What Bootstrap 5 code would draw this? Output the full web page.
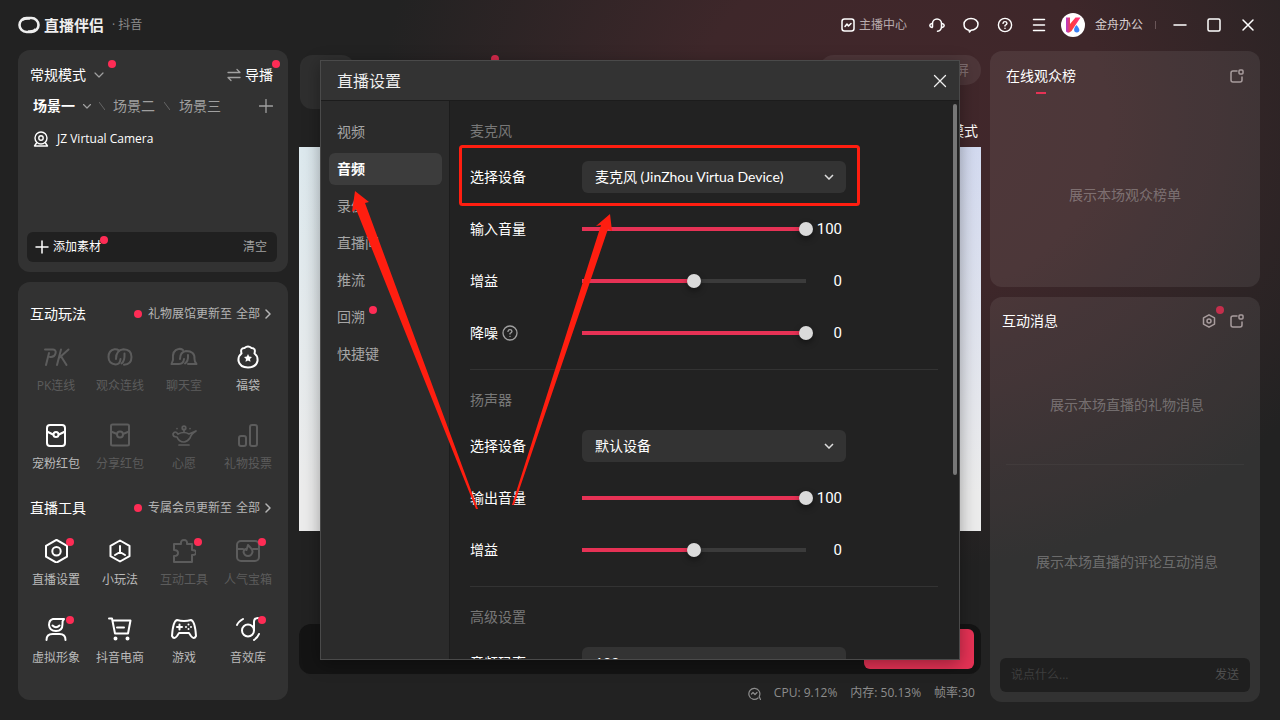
<!DOCTYPE html>
<html lang="zh-CN">
<head>
<meta charset="utf-8">
<meta name="viewport" content="width=device-width, initial-scale=1">
<title>直播伴侣</title>
<link href="https://cdn.jsdelivr.net/npm/bootstrap@5.3.0/dist/css/bootstrap.min.css" rel="stylesheet">
<script src="https://cdn.jsdelivr.net/npm/bootstrap@5.3.0/dist/js/bootstrap.bundle.min.js"></script>
<style>
  :root { --rose: #e63255; --dot: #fe2c55; --mark: #ff1e10; }
  body {
    font-family: "Open Sans", "Noto Sans CJK SC", sans-serif;
    font-size: 14px; line-height: 20px; color: #fff;
    background: #222 radial-gradient(ellipse 520px 450px at 900px 120px, #42272b 0, #3e272a 40%, #222 100%) no-repeat;
  }
  .studio { min-height: 100vh; }
  svg.ico { fill: none; stroke: currentColor; stroke-width: 2; stroke-linecap: round; stroke-linejoin: round; display: block; flex: none; }
  .plain { background: none; border: 0; padding: 0; color: inherit; }
  .t12 { font-size: 12px; line-height: 18px; }
  .dim { color: #a0a0a0; }
  .faint { color: rgba(255,255,255,.3); }
  .title-bar { height: 50px; padding: 0 20px 0 18px; }
  .title-bar .sq { width: 24px; height: 24px; display: grid; place-items: center; }
  .brand { font-size: 15px; font-weight: 700; color: #eee; }
  .avatar { width: 24px; height: 24px; }
  .bar-sep { width: 1px; height: 8px; background: #6a5658; margin: 0 12px 0 2px; }
  .stage { display: grid; grid-template-columns: 270px minmax(0,1fr) 270px; column-gap: 9px; padding: 0 20px 0 18px; }
  .center-col { padding-left: 2px; }
  .panel { background: rgba(255,255,255,.075); border-radius: 12px; }
  .red-dot { width: 8px; height: 8px; border-radius: 50%; background: var(--dot); flex: none; }
  .pin { position: absolute; top: -5px; right: -7px; }
  .scenes { min-height: 222px; padding: 10px 11px 10px 9px; }
  .add-bar { height: 30px; border-radius: 6px; background: #202020; padding: 0 10px 0 8px; }
  .tools { padding: 4px 8px 26px 6px; }
  .tools-head { height: 56px; padding: 0 8px 0 6px; }
  .tools-head a { color: #b5b5b5; }
  .tools-head .red-dot { margin-right: 6px; }
  .tiles { display: grid; grid-template-columns: repeat(4, 1fr); row-gap: 18px; }
  .tile { height: 60px; padding-top: 3px; display: flex; flex-direction: column; align-items: center; gap: 8px; font-size: 12px; line-height: 18px; white-space: nowrap; color: #bbb; }
  .tile .glyph { position: relative; color: #fff; }
  .tile .pin { top: -1px; right: -6px; }
  .tile:disabled, .tile:disabled .glyph { color: #5c5c5c; }
  .viewport { aspect-ratio: 16 / 9; background: linear-gradient(90deg, #dde9ee, #d3daf0); }
  .veil { background: linear-gradient(transparent, #ececec 90%); }
  .chip-l { width: 54px; height: 54px; border-radius: 12px; background: #2f2f2f; margin-left: 1px; }
  .chip-r { width: 162px; height: 30px; border-radius: 15px; background: rgba(255,255,255,.07); padding-right: 12px; }
  .dock { height: 50px; border-radius: 12px; background: #141414; padding: 5px 7px; }
  .btn-live { width: 110px; height: 40px; border-radius: 6px; background: var(--rose); color: #fff; border: 0; }
  .stats { height: 38px; color: #8d8d8d; padding-right: 6px; gap: 13px; }
  .say { height: 34px; border-radius: 6px; background: #1f1f1f; margin: 0 10px 10px; padding: 0 11px; color: #4f4f4f; }
  .say input { background: none; border: 0; outline: 0; color: inherit; min-width: 0; padding: 0; }
  .say input::placeholder { color: #3d3d3d; }

  .dialog { position: absolute; top: 60px; left: 0; right: 0; margin: 0 auto; width: 640px; height: 600px;
    background: #222; border: 1px solid #4a4a4a; box-shadow: 0 4px 16px rgba(0,0,0,.35); display: flex; flex-direction: column; }
  .dialog-head { height: 40px; background: #333; border-bottom: 1px solid #1c1c1c; padding: 0 12px 0 16px; font-size: 16px; color: #eee; flex: none; }
  .side { width: 129px; background: #2b2b2b; border-right: 1px solid #1c1c1c; padding: 15px 7px 0 8px; display: flex; flex-direction: column; gap: 5px; flex: none; }
  .side a { height: 32px; line-height: 32px; padding-left: 8px; border-radius: 6px; color: #a6a6a6; text-decoration: none; }
  .side a.on { background: #3c3c3c; color: #fff; font-weight: 700; }
  .pane { padding: 0 21px 0 20px; overflow: hidden; min-width: 0; position: relative; }
  .group { padding: 10px 0; border-bottom: 1px solid #333; margin: 0; }
  .group h2 { font-size: 14px; font-weight: 400; line-height: 40px; margin: 0; color: #787878; }
  .field { height: 52px; display: flex; align-items: center; }
  .field > label { width: 112px; display: flex; align-items: center; gap: 4px; }
  .picker { width: 264px; height: 32px; border: 0; border-radius: 6px; color: #fff; padding: 0 32px 0 13px; appearance: none;
    font-family: Lato, "Noto Sans CJK SC", sans-serif;
    background: #333 url("data:image/svg+xml,%3Csvg xmlns='http://www.w3.org/2000/svg' viewBox='0 0 10 6' fill='none' stroke='%23ddd' stroke-width='1.5'%3E%3Cpath d='M1 1l4 4 4-4'/%3E%3C/svg%3E") no-repeat right 12px center / 10px 6px; }
  .slide { appearance: none; background: none; width: 238px; height: 14px; margin: 0 0 0 -7px; }
  .slide::-webkit-slider-runnable-track { height: 4px; background: linear-gradient(90deg, transparent 7px, var(--rose) 7px, var(--rose) calc(7px + 224px * var(--v)), #3b3b3b calc(7px + 224px * var(--v)), #3b3b3b calc(100% - 7px), transparent calc(100% - 7px)); }
  .slide::-webkit-slider-thumb { appearance: none; width: 14px; height: 14px; margin-top: -5px; border-radius: 50%; background: #dadada; box-shadow: 0 3px 6px rgba(0,0,0,.4); }
  .field output { width: 29px; text-align: right; font-family: Roboto, sans-serif; font-size: 15px; line-height: 20px; padding: 0; }
  .thumb { position: absolute; right: 2px; top: 3px; width: 4px; height: 371px; border-radius: 2px; background: #777; }
  .marks { position: absolute; top: -1px; left: -1px; pointer-events: none; }
</style>
</head>
<body>
<div class="studio d-flex flex-column position-relative">

  <header class="title-bar d-flex align-items-center justify-content-between">
    <div class="d-flex align-items-center">
      <svg width="22" height="18" viewBox="0 0 22 18" fill="none" stroke="#eee"><rect x="1.500" y="2" width="19" height="14" rx="7" stroke-width="2.600"/><path d="M4 4Q7 2 12 2.500M10 15.500Q16 16 18 13" stroke-width="2.600"/></svg>
      <span class="brand ms-1">直播伴侣</span>
      <span class="t12 ms-2" style="color:#8c8c8c">· 抖音</span>
    </div>
    <div class="d-flex align-items-center" style="gap:10px">
      <button class="plain t12 d-flex align-items-center gap-1 me-2" style="color:#b9acae"><svg class="ico" width="14" height="14" viewBox="0 0 14 14" style="color:#fff;stroke-width:1.500"><rect x="1" y="1" width="12" height="12" rx="2.500"/><path d="M4 8.500L6 6l1.500 2L10 5.500"/></svg>主播中心</button>
      <button class="plain sq" aria-label="客服"><svg class="ico" width="16" height="16" viewBox="0 0 16 16" style="stroke-width:1.500"><path d="M3.500 10V6.500a4.500 4.500 0 0 1 9 0V10Q12 14 8.500 14.300"/><path d="M3 6.500Q.800 7 .800 8.500T3 10.500M13 6.500q2.200.500 2.200 2T13 10.500" /></svg></button>
      <button class="plain sq" aria-label="消息"><svg class="ico" width="16" height="16" viewBox="0 0 16 16" style="stroke-width:1.500"><path d="M6 13.200Q1 12 1 7.200C1 4 4 1.500 8 1.500s7 2.500 7 5.700-3 5.800-7 6l-1.500 1.800Z"/></svg></button>
      <button class="plain sq" aria-label="帮助"><svg class="ico" width="16" height="16" viewBox="0 0 16 16" style="stroke-width:1.400"><circle cx="8" cy="8" r="6.600"/><path d="M6 6.400Q6.200 4.600 8 4.600T10 6.300Q10 7.300 8 8.500v.500M8 11.300v.100"/></svg></button>
      <button class="plain sq" aria-label="菜单"><svg class="ico" width="14" height="14" viewBox="0 0 14 14" style="stroke-width:1.500"><path d="M1.500 1.500h11M1.500 7h11M1.500 12.500h11"/></svg></button>
      <svg class="avatar" viewBox="0 0 24 24"><defs><linearGradient id="kg" x1="0" y1="0" x2="1" y2="0"><stop offset="0" stop-color="#b13bd0"/><stop offset=".35" stop-color="#ff4038"/><stop offset="1" stop-color="#ff2e8a"/></linearGradient></defs><circle cx="12" cy="12" r="12" fill="#fff"/><path d="M5 4.500h4v6.500l5.500-6.500h5L10.500 18Q7 21 5 18.500z" fill="url(#kg)"/><path d="M15.500 12q4 4.500 2.500 6.500-2 2-4.500 0-1.500-3 2-6.500z" fill="#3b82f6"/></svg>
      <span class="t12" style="color:#d8cfd0">金舟办公</span>
      <span class="bar-sep"></span>
      <button class="plain sq" aria-label="最小化" style="margin-left:-10px"><svg class="ico" width="14" height="14" viewBox="0 0 14 14" style="stroke-width:1.500"><path d="M1 7h12"/></svg></button>
      <button class="plain sq" aria-label="最大化"><svg class="ico" width="14" height="14" viewBox="0 0 14 14" style="stroke-width:1.500"><rect x="1" y="1" width="12" height="12" rx="1.500"/></svg></button>
      <button class="plain sq" aria-label="关闭"><svg class="ico" width="14" height="14" viewBox="0 0 14 14" style="stroke-width:1.500"><path d="M2 2l10 10M12 2L2 12"/></svg></button>
    </div>
  </header>

  <main class="stage flex-grow-1">
    <div class="d-flex flex-column pb-3 mb-1" style="gap:10px">
      <section class="panel scenes d-flex flex-column">
        <div class="d-flex align-items-center justify-content-between" style="height:30px;padding:0 4px 0 3px">
          <button class="plain position-relative d-flex align-items-center gap-2">常规模式<svg class="ico dim" width="10" height="6" viewBox="0 0 10 6" style="stroke-width:1.200"><path d="M1 1l4 4 4-4"/></svg><i class="red-dot pin" style="right:-12px"></i></button>
          <button class="plain position-relative d-flex align-items-center gap-1"><svg class="ico dim" width="14" height="14" viewBox="0 0 14 14" style="stroke-width:1.300"><path d="M1 4.500h12L10 1.500M13 9.500H1l3 3"/></svg>导播<i class="red-dot pin"></i></button>
        </div>
        <div class="d-flex align-items-center dim" style="height:32px;padding:0 4px 0 6px">
          <button class="plain fw-bold text-white d-flex align-items-center gap-2">场景一<svg class="ico dim" width="8" height="5" viewBox="0 0 8 5" style="stroke-width:1.200"><path d="M.500.500L4 4 7.500.500"/></svg></button>
          <svg class="ico ms-2" width="6" height="8" viewBox="0 0 6 8" style="color:#666;stroke-width:1"><path d="M0 0l6 8"/></svg>
          <button class="plain ms-2">场景二</button>
          <svg class="ico" width="6" height="8" viewBox="0 0 6 8" style="color:#666;stroke-width:1;margin:0 9px"><path d="M0 0l6 8"/></svg>
          <button class="plain">场景三</button>
          <button class="plain ms-auto" aria-label="新建场景"><svg class="ico" width="14" height="14" viewBox="0 0 14 14" style="stroke-width:1.300"><path d="M7 .500v13M.500 7h13"/></svg></button>
        </div>
        <div class="t12 d-flex align-items-center gap-2" style="height:34px;padding-left:6px">
          <svg class="ico" width="16" height="16" viewBox="0 0 16 16" style="stroke-width:1.400"><circle cx="8" cy="7" r="6"/><circle cx="8" cy="7" r="2.200"/><path d="M3.500 12L1.500 15H14.500L12.500 12"/></svg>JZ Virtual Camera
        </div>
        <div class="add-bar t12 mt-auto d-flex align-items-center justify-content-between">
          <button class="plain position-relative d-flex align-items-center gap-1"><svg class="ico" width="14" height="14" viewBox="0 0 14 14" style="stroke-width:1.500"><path d="M7 1v12M1 7h12"/></svg>添加素材<i class="red-dot pin" style="top:-2px"></i></button>
          <button class="plain dim">清空</button>
        </div>
      </section>

      <section class="panel tools flex-grow-1">
        <div class="tools-head d-flex align-items-center justify-content-between"><span>互动玩法</span>
          <a href="#" class="t12 d-flex align-items-center text-decoration-none"><i class="red-dot"></i>礼物展馆更新至<span class="mx-1">全部</span><svg class="ico" width="8" height="10" viewBox="0 0 8 10" style="stroke-width:1.500"><path d="M2 1l4 4-4 4"/></svg></a></div>
        <div class="tiles">
          <button class="plain tile" disabled><span class="glyph"><svg class="ico" width="28" height="24" viewBox="0 0 28 24"><path d="M3 4.500h8q3.500.500 2.500 4Q12.500 12 9 12H8M7 8L4 20M19 4.500L15 20M26.500 4.500L17 13M19.500 12l5 8"/></svg></span>PK连线</button>
          <button class="plain tile" disabled><span class="glyph"><svg class="ico" width="26" height="24" viewBox="0 0 26 24"><path d="M12 5.500Q10 4 7.500 4.300 1.500 5.500 1.500 12t7 7.500Q13 19.500 13.500 14M9 14Q9 5 16.500 4.300 24.500 4.500 24.500 12T17 19.800M17.500 8.500Q18 16 14.500 18.500"/></svg></span>观众连线</button>
          <button class="plain tile" disabled><span class="glyph"><svg class="ico" width="28" height="24" viewBox="0 0 28 24"><path d="M13 5Q11 3.500 8.500 4 2 5 3 15L1.500 19H9Q13.500 19 14 14M10 14Q10 7 16 6 25 6 24.500 14 24.500 17 26.500 19H18M18 10Q18.500 16 15 18.500"/></svg></span>聊天室</button>
          <button class="plain tile"><span class="glyph"><svg class="ico" width="24" height="24" viewBox="0 0 24 24"><path d="M8.500 3Q12 0 15.500 3 20 3 18.500 8.500 22 11 21.500 16 20 22.500 12 22.500T2.500 16Q2 11 5.500 8.500 4 3 8.500 3z"/><path d="M12 9l1.200 2.500 2.800.400-2 2 .500 2.800L12 15.400l-2.500 1.300.500-2.800-2-2 2.800-.400z" fill="currentColor" stroke="none"/></svg></span>福袋</button>
          <button class="plain tile"><span class="glyph"><svg class="ico" width="24" height="24" viewBox="0 0 24 24"><rect x="3" y="2" width="18" height="21" rx="3"/><path d="M3 8.500l6 3M21 8.500l-6 3"/><circle cx="12" cy="11.500" r="2.500"/></svg></span>宠粉红包</button>
          <button class="plain tile" disabled><span class="glyph"><svg class="ico" width="24" height="24" viewBox="0 0 24 24"><rect x="3" y="1.500" width="18" height="21" rx="1.500"/><path d="M3 8.500l6 2.500M21 8.500l-6 2.500"/><circle cx="12" cy="11.500" r="3"/></svg></span>分享红包</button>
          <button class="plain tile" disabled><span class="glyph"><svg class="ico" width="26" height="24" viewBox="0 0 26 24" style="stroke-width:1.700"><path d="M7 11q6-3 11 0l7-3q-5 3-6 7-3 4-6 4-5 0-7-5-4 0-4-3 2-4 5 0M8 22h10M13 9V6M6 5.500v.100M19 5.500v.100"/><circle cx="13" cy="5" r="1.800"/></svg></span>心愿</button>
          <button class="plain tile" disabled><span class="glyph"><svg class="ico" width="24" height="24" viewBox="0 0 24 24"><rect x="3" y="13" width="7" height="10" rx="2"/><rect x="14" y="2" width="7" height="21" rx="2"/></svg></span>礼物投票</button>
        </div>
        <div class="tools-head d-flex align-items-center justify-content-between"><span>直播工具</span>
          <a href="#" class="t12 d-flex align-items-center text-decoration-none"><i class="red-dot"></i>专属会员更新至<span class="mx-1">全部</span><svg class="ico" width="8" height="10" viewBox="0 0 8 10" style="stroke-width:1.500"><path d="M2 1l4 4-4 4"/></svg></a></div>
        <div class="tiles">
          <button class="plain tile"><span class="glyph"><svg class="ico" width="24" height="24" viewBox="0 0 24 24"><path d="M12.500 0.800l10.500 6v10.900l-10.500 6-10.500-6v-10.900z"/><circle cx="12.500" cy="12.200" r="4.200"/></svg><i class="red-dot pin"></i></span>直播设置</button>
          <button class="plain tile"><span class="glyph"><svg class="ico" width="24" height="24" viewBox="0 0 24 24"><path d="M12 1.500l9.500 5.300v10.400L12 22.500l-9.500-5.300V6.800zM12 7v6M12 13l-5 3M12 13l5 3"/></svg></span>小玩法</button>
          <button class="plain tile" disabled><span class="glyph"><svg class="ico" width="24" height="24" viewBox="0 0 24 24"><path d="M2 5h7q-.500-4 3-4t3 4h5v6q4 0 4 2.500T20 16v7H2v-6q4 0 4-3t-4-3z"/></svg><i class="red-dot pin"></i></span>互动工具</button>
          <button class="plain tile" disabled><span class="glyph"><svg class="ico" width="24" height="24" viewBox="0 0 24 24"><rect x="1" y="2" width="22" height="20" rx="4"/><path d="M1 10h6M17 10h6M12 6q5 5 4.500 7-1 4-4.500 4t-4.500-4q0-2 2-3l1 1z"/></svg><i class="red-dot pin"></i></span>人气宝箱</button>
          <button class="plain tile"><span class="glyph"><svg class="ico" width="24" height="24" viewBox="0 0 24 24"><path d="M9 2h11q-2 2-1.500 5 0 7-6.500 7T5 8q0-5 4-6zM8.500 8.500q3.500 3.500 7 0M2.500 23q0-6 6-6h7q6 0 6 6"/></svg><i class="red-dot pin"></i></span>虚拟形象</button>
          <button class="plain tile"><span class="glyph"><svg class="ico" width="24" height="24" viewBox="0 0 24 24"><path d="M1 1.500h3l3 15h13l2.500-13H5M9 10.500h7"/><circle cx="7.500" cy="21.500" r="1" /><circle cx="19.500" cy="21.500" r="1"/></svg></span>抖音电商</button>
          <button class="plain tile"><span class="glyph"><svg class="ico" width="26" height="24" viewBox="0 0 26 24"><path d="M6 3q7 2 14 0 4 1 5 16-2 4-5 0l-2-3H8l-2 3q-3 4-5 0Q2 4 6 3zM6 10h5M8.500 7.500v5M17.500 7.500v.100M17.500 12v.100M15 10v.100M20 10v.100"/></svg></span>游戏</button>
          <button class="plain tile"><span class="glyph"><svg class="ico" width="24" height="24" viewBox="0 0 24 24"><circle cx="12" cy="13.500" r="6"/><path d="M18 13V5q0-4 4-4M1 8q1-3 6-6M18 23q4-3 5-6"/></svg><i class="red-dot pin"></i></span>音效库</button>
        </div>
      </section>
    </div>

    <div class="center-col d-flex flex-column pb-2">
      <div class="d-flex align-items-start" style="padding-top:5px;height:71px">
        <div class="chip-l"></div>
        <i class="red-dot" style="opacity:.8;margin-left:137px"></i>
        <div class="chip-r ms-auto d-flex align-items-center justify-content-end faint">屏</div>
      </div>
      <div class="text-end" style="height:26px;padding-right:3px">模式</div>
      <div class="viewport"><div class="veil h-100"></div></div>
      <div class="dock mt-auto d-flex justify-content-end"><button class="btn-live" aria-label="开始直播"></button></div>
      <div class="stats t12 d-flex align-items-center justify-content-end">
        <svg class="ico" width="13" height="13" viewBox="0 0 13 13" style="stroke-width:1.200"><path d="M10 11a5.500 5.500 0 1 1 1.200-1.500L12.500 12.500M3.500 7L5 5.500l2 2L9 5.500"/></svg><span>CPU: 9.12%</span><span>内存: 50.13%</span><span>帧率:30</span>
      </div>
    </div>

    <aside class="d-flex flex-column" style="gap:10px;padding:1px 0 18px">
      <section class="panel d-flex flex-column" style="height:236px">
        <div class="d-flex align-items-center justify-content-between ps-3 pe-3" style="height:50px">
          <span>在线观众榜</span>
          <button class="plain" aria-label="弹出"><svg class="ico" width="14" height="14" viewBox="0 0 14 14" style="color:#a89c9d;stroke-width:1.500"><path d="M7 2H3Q1 2 1 4v7q0 2 2 2h7q2 0 2-2V8"/><rect x="9" y="1" width="4" height="4" rx="1"/></svg></button>
        </div>
        <i style="width:10px;height:2px;background:var(--rose);margin:-9px 0 0 46px"></i>
        <div class="flex-grow-1 d-flex justify-content-center align-items-center faint pt-2">展示本场观众榜单</div>
      </section>
      <section class="panel flex-grow-1 d-flex flex-column">
        <div class="d-flex align-items-center ps-2 pe-3" style="height:48px">
          <span class="ms-1 me-auto">互动消息</span>
          <button class="plain position-relative" aria-label="设置" style="margin-right:14px"><svg class="ico" width="14" height="14" viewBox="0 0 14 14" style="color:#a89c9d;stroke-width:1.500"><path d="M7 .800l5.500 3.100v6.200L7 13.200 1.500 10.100V3.900z"/><circle cx="7" cy="7" r="2"/></svg><i class="red-dot pin" style="top:-8px;right:-8px;opacity:.7"></i></button>
          <button class="plain" aria-label="弹出"><svg class="ico" width="14" height="14" viewBox="0 0 14 14" style="color:#a89c9d;stroke-width:1.500"><path d="M7 2H3Q1 2 1 4v7q0 2 2 2h7q2 0 2-2V8"/><rect x="9" y="1" width="4" height="4" rx="1"/></svg></button>
        </div>
        <div class="faint d-flex align-items-center justify-content-center mx-3 ps-1" style="height:120px;border-bottom:1px solid #ffffff0a">展示本场直播的礼物消息</div>
        <div class="faint flex-grow-1 d-flex align-items-center justify-content-center ps-1">展示本场直播的评论互动消息</div>
        <div class="say t12 d-flex align-items-center"><input class="flex-grow-1" type="text" placeholder="说点什么..." aria-label="说点什么"><button class="plain">发送</button></div>
      </section>
    </aside>
  </main>

  <div class="dialog" role="dialog" aria-label="直播设置">
    <div class="dialog-head d-flex align-items-center justify-content-between">直播设置
      <button class="plain" aria-label="关闭"><svg class="ico" width="14" height="14" viewBox="0 0 14 14" style="stroke-width:1.300"><path d="M1.500 1.500l11 11M12.500 1.500l-11 11"/></svg></button></div>
    <div class="d-flex flex-grow-1" style="min-height:0">
      <nav class="side"><a href="#">视频</a><a href="#" class="on">音频</a><a href="#">录像</a><a href="#">直播间</a><a href="#">推流</a><a href="#"><span class="position-relative">回溯<i class="red-dot pin" style="top:-1px;right:-12px"></i></span></a><a href="#">快捷键</a></nav>
      <form class="pane flex-grow-1">
        <div class="group">
          <h2>麦克风</h2>
          <div class="field"><label for="mic">选择设备</label><select class="picker" id="mic"><option>麦克风 (JinZhou Virtua Device)</option></select></div>
          <div class="field"><label for="vin">输入音量</label><input class="slide" id="vin" type="range" value="100" style="--v:1"><output>100</output></div>
          <div class="field"><label for="gin">增益</label><input class="slide" id="gin" type="range" min="-50" max="50" value="0" style="--v:.5"><output>0</output></div>
          <div class="field"><label for="nr">降噪<svg class="ico" width="16" height="16" viewBox="0 0 16 16" style="color:#a0a0a0;stroke-width:1.300"><circle cx="8" cy="8" r="7"/><path d="M6 6.400Q6.200 4.600 8 4.600T10 6.300Q10 7.300 8 8.500v.500M8 11.300v.100"/></svg></label><input class="slide" id="nr" type="range" value="100" style="--v:1"><output>0</output></div>
        </div>
        <div class="group">
          <h2>扬声器</h2>
          <div class="field"><label for="spk">选择设备</label><select class="picker" id="spk"><option>默认设备</option></select></div>
          <div class="field"><label for="vout">输出音量</label><input class="slide" id="vout" type="range" value="100" style="--v:1"><output>100</output></div>
          <div class="field"><label for="gout">增益</label><input class="slide" id="gout" type="range" min="-50" max="50" value="0" style="--v:.5"><output>0</output></div>
        </div>
        <div class="group">
          <h2>高级设置</h2>
          <div class="field"><label for="rate">音频码率</label><select class="picker" id="rate"><option>128</option></select></div>
        </div>
        <i class="thumb"></i>
      </form>
    </div>
    <svg class="marks" width="640" height="600" viewBox="0 0 640 600">
      <rect x="140.500" y="86.500" width="398" height="58" rx="2" fill="none" stroke="#ff1e10" stroke-width="3"/>
      <path fill="#ff1e10" d="M35 131L49 142L45 143L158 449L156 449L36 149L32 152ZM290 154L292 171L288 169L194 445L192 445L281 165L276 166Z"/>
    </svg>
  </div>
</div>
</body>
</html>
